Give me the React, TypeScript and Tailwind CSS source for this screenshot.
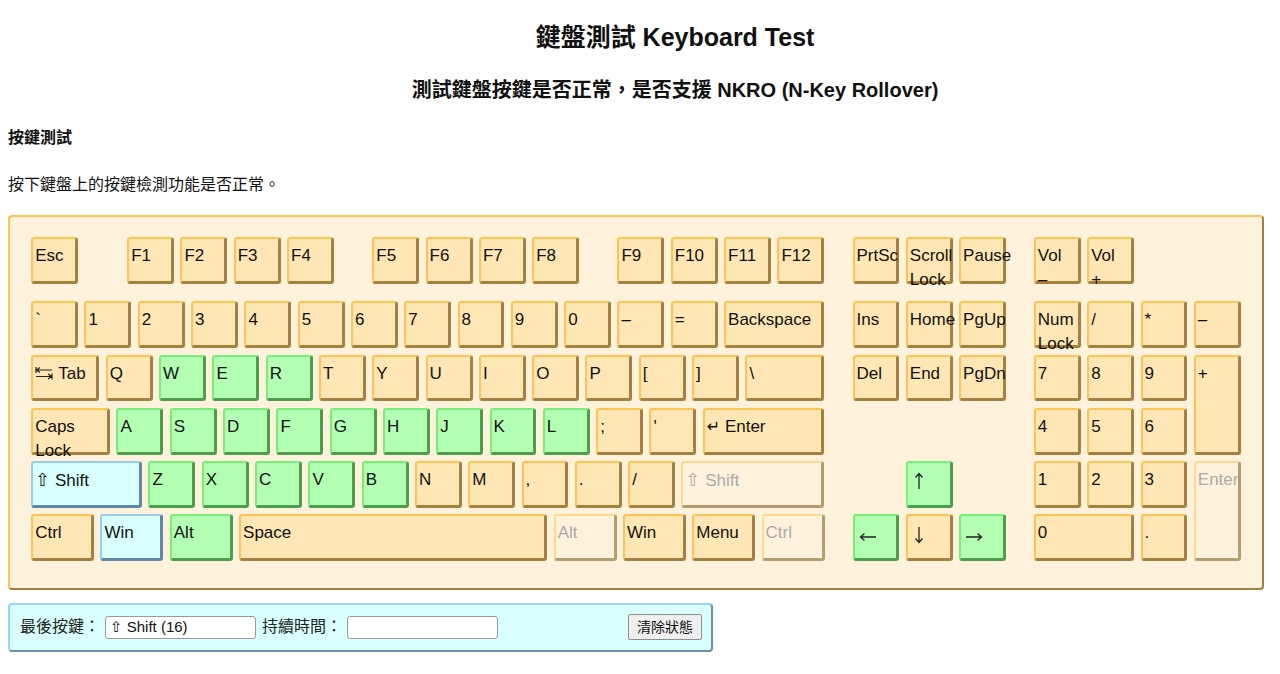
import React from 'react';
import clsx from 'clsx';

// one key unit in px, keys sit inside their slot with a small margin
const U = 53.33;

type State = 'n' | 'g' | 'b' | 'f';
type KeyDef = { l?: React.ReactNode; w?: number; s?: State; sp?: number };

const FONT = "font-['Liberation_Sans','DejaVu_Sans','Noto_Sans_CJK_TC',sans-serif]";

const stateClass: Record<State, string> = {
  n: 'bg-[#ffe6b4] border-t-[#ffc352] border-l-[#ffc352] border-b-[#a6803f] border-r-[#a6803f] text-[#111]',
  g: 'bg-[#b3ffb3] border-t-[#77ee77] border-l-[#77ee77] border-b-[#4c9e4c] border-r-[#4c9e4c] text-[#111]',
  b: 'bg-[#d9ffff] border-t-[#99ccee] border-l-[#99ccee] border-b-[#5f89a6] border-r-[#5f89a6] text-[#111]',
  f: 'bg-[#fff2dc] border-t-[#ffd890] border-l-[#ffd890] border-b-[#b59b70] border-r-[#b59b70] text-[#aaa]',
};

const KEY = 'rounded-[3px] border-2 border-r-[3px] border-b-[3px] pl-[2px] pt-[5px] text-[17px] leading-[24px] whitespace-pre-line';

const TabIcon = () => (
  <svg width="18" height="14" viewBox="0 0 18 14" className="inline-block align-[-1px] mr-[5px]" fill="none" stroke="#222" strokeWidth="1.2">
    <path d="M1 1v6M1 4h16M5 1.5L1.5 4 5 6.5" />
    <path d="M17 7.5v6M1 10.5h16M13 8l3.5 2.5L13 13" />
  </svg>
);

// thin arrows like the reference glyphs, drawn pointing up and rotated
const Arrow = ({ dir }: { dir: 'up' | 'down' | 'left' | 'right' }) => {
  const rot = { up: 0, down: 180, left: 270, right: 90 }[dir];
  const horiz = dir === 'left' || dir === 'right';
  return (
    <svg
      width={horiz ? 18 : 10}
      height={horiz ? 10 : 18}
      viewBox={horiz ? '-4 4 18 10' : '0 0 10 18'}
      className={clsx('inline-block', horiz ? 'mt-[5px] ml-[2px]' : 'mt-[1px] ml-[4px]')}
      fill="none"
      stroke="#222"
      strokeWidth="1.3"
    >
      <g transform={`rotate(${rot} 5 9)`}>
        <path d="M5 1.5V17M1.5 5.5L5 1.5l3.5 4" />
      </g>
    </svg>
  );
};

function Key({ k }: { k: KeyDef }) {
  const w = (k.w ?? 1) * U - 6.4;
  return (
    <div className={clsx('m-[3.2px] shrink-0', KEY, stateClass[k.s ?? 'n'])} style={{ width: w, height: U - 6.4 }}>
      {k.l}
    </div>
  );
}

function Row({ keys }: { keys: KeyDef[] }) {
  return (
    <div className="flex h-[53.33px]">
      {keys.map((k, i) =>
        k.sp !== undefined ? (
          <div key={i} className="shrink-0" style={{ width: k.sp * U }} />
        ) : (
          <Key key={i} k={k} />
        )
      )}
    </div>
  );
}

const L = (s: React.ReactNode, st: State = 'n', w = 1): KeyDef => ({ l: s, s: st, w });

const mainF: KeyDef[] = [
  L('Esc'), { sp: 0.8 },
  L('F1'), L('F2'), L('F3'), L('F4'), { sp: 0.6 },
  L('F5'), L('F6'), L('F7'), L('F8'), { sp: 0.6 },
  L('F9'), L('F10'), L('F11'), L('F12'),
];

const mainRows: KeyDef[][] = [
  ['`', '1', '2', '3', '4', '5', '6', '7', '8', '9', '0', '–', '='].map((c) => L(c)).concat([L('Backspace', 'n', 2)]),
  [
    { l: <><TabIcon />Tab</>, w: 1.4 },
    L('Q'), L('W', 'g'), L('E', 'g'), L('R', 'g'), L('T'), L('Y'), L('U'), L('I'), L('O'), L('P'), L('['), L(']'),
    L('\\', 'n', 1.6),
  ],
  [
    L('Caps\nLock', 'n', 1.6),
    ...['A', 'S', 'D', 'F', 'G', 'H', 'J', 'K', 'L'].map((c) => L(c, 'g')),
    L(';'), L("'"), L(<><span className="font-['DejaVu_Sans',sans-serif] text-[16px]">↵</span> Enter</>, 'n', 2.4),
  ],
  [
    L(<><span className="font-['DejaVu_Sans',sans-serif] text-[18px]">⇧</span> Shift</>, 'b', 2.2),
    ...['Z', 'X', 'C', 'V', 'B'].map((c) => L(c, 'g')),
    L('N'), L('M'), L(','), L('.'), L('/'),
    L(<><span className="font-['DejaVu_Sans',sans-serif] text-[18px]">⇧</span> Shift</>, 'f', 2.8),
  ],
  [
    L('Ctrl', 'n', 1.3), L('Win', 'b', 1.3), L('Alt', 'g', 1.3), L('Space', 'n', 5.9),
    L('Alt', 'f', 1.3), L('Win', 'n', 1.3), L('Menu', 'n', 1.3), L('Ctrl', 'f', 1.3),
  ],
];

const navF: KeyDef[] = [L('PrtSc'), L('Scroll\nLock'), L('Pause')];
const navRows: KeyDef[][] = [
  [L('Ins'), L('Home'), L('PgUp')],
  [L('Del'), L('End'), L('PgDn')],
  [],
  [{ sp: 1 }, L(<Arrow dir="up" />, 'g')],
  [L(<Arrow dir="left" />, 'g'), L(<Arrow dir="down" />), L(<Arrow dir="right" />, 'g')],
];

const padF: KeyDef[] = [L('Vol\n–'), L('Vol\n+')];

// numpad cells with their grid spans
const pad: { k: KeyDef; cls?: string }[] = [
  { k: L('Num\nLock') }, { k: L('/') }, { k: L('*') }, { k: L('–') },
  { k: L('7') }, { k: L('8') }, { k: L('9') }, { k: L('+'), cls: 'row-span-2' },
  { k: L('4') }, { k: L('5') }, { k: L('6') },
  { k: L('1') }, { k: L('2') }, { k: L('3') }, { k: L('Enter', 'f'), cls: 'row-span-2' },
  { k: L('0'), cls: 'col-span-2' }, { k: L('.') },
];

const App: React.FC = () => {
  return (
    <div className={clsx('min-h-[674px] bg-white px-2 text-[#111]', FONT)}>
      <h1 className="pt-[22px] pl-[70px] text-center text-[25px] font-bold leading-[30px]">鍵盤測試 Keyboard Test</h1>
      <h2 className="mt-[26px] pl-[70px] text-center text-[20px] font-bold leading-[24px]">
        測試鍵盤按鍵是否正常，是否支援 NKRO (N-Key Rollover)
      </h2>
      <h3 className="mt-[24px] text-[16px] font-bold leading-[24px]">按鍵測試</h3>
      <p className="mt-[23px] text-[16px] leading-[24px]">按下鍵盤上的按鍵檢測功能是否正常。</p>

      {/* keyboard */}
      <div className="mt-[18px] flex w-[1256px] rounded-[4px] border-2 border-t-[#ffc352] border-l-[#ffc352] border-b-[#a6803f] border-r-[#a6803f] bg-[#fff2dc] pt-[17px] pb-[23px] pl-[18px]">
        <div className="flex w-[800px] shrink-0 flex-col">
          <Row keys={mainF} />
          <div className="h-[10.67px]" />
          {mainRows.map((r, i) => (
            <Row key={i} keys={r} />
          ))}
        </div>
        <div className="w-[21.33px] shrink-0" />
        <div className="flex w-[160px] shrink-0 flex-col">
          <Row keys={navF} />
          <div className="h-[10.67px]" />
          {navRows.map((r, i) => (
            <Row key={i} keys={r} />
          ))}
        </div>
        <div className="w-[21.33px] shrink-0" />
        <div className="flex w-[213.33px] shrink-0 flex-col">
          <Row keys={padF} />
          <div className="h-[10.67px]" />
          <div className="grid grid-cols-[repeat(4,53.33px)] grid-rows-[repeat(5,53.33px)]">
            {pad.map((c, i) => (
              <div key={i} className={clsx('flex', c.cls)}>
                <div className={clsx('m-[3.2px] flex-1', KEY, stateClass[c.k.s ?? 'n'])}>{c.k.l}</div>
              </div>
            ))}
          </div>
        </div>
      </div>

      {/* status bar */}
      <div className="mt-[13px] flex h-[49px] w-[705px] items-center rounded-[4px] border-2 border-t-[#99d4f8] border-l-[#99d4f8] border-b-[#6a8fa8] border-r-[#6a8fa8] bg-[#d9ffff] pl-[10px] pr-[9px] text-[16px] text-[#222]">
        <span>最後按鍵：</span>
        <input
          readOnly
          value="⇧ Shift (16)"
          className="ml-[5px] h-[23px] w-[151px] rounded-[3px] border border-[#999] bg-white px-[4px] text-[15px] text-[#111] outline-none"
        />
        <span className="ml-[6px]">持續時間：</span>
        <input
          readOnly
          value=""
          className="ml-[5px] h-[23px] w-[151px] rounded-[3px] border border-[#999] bg-white px-[4px] text-[15px] outline-none"
        />
        <button className="ml-auto h-[26px] w-[74px] rounded-[2px] border border-[#8f8f8f] bg-[#efefef] text-[14px] text-[#111]">
          清除狀態
        </button>
      </div>
    </div>
  );
};

export default App;
